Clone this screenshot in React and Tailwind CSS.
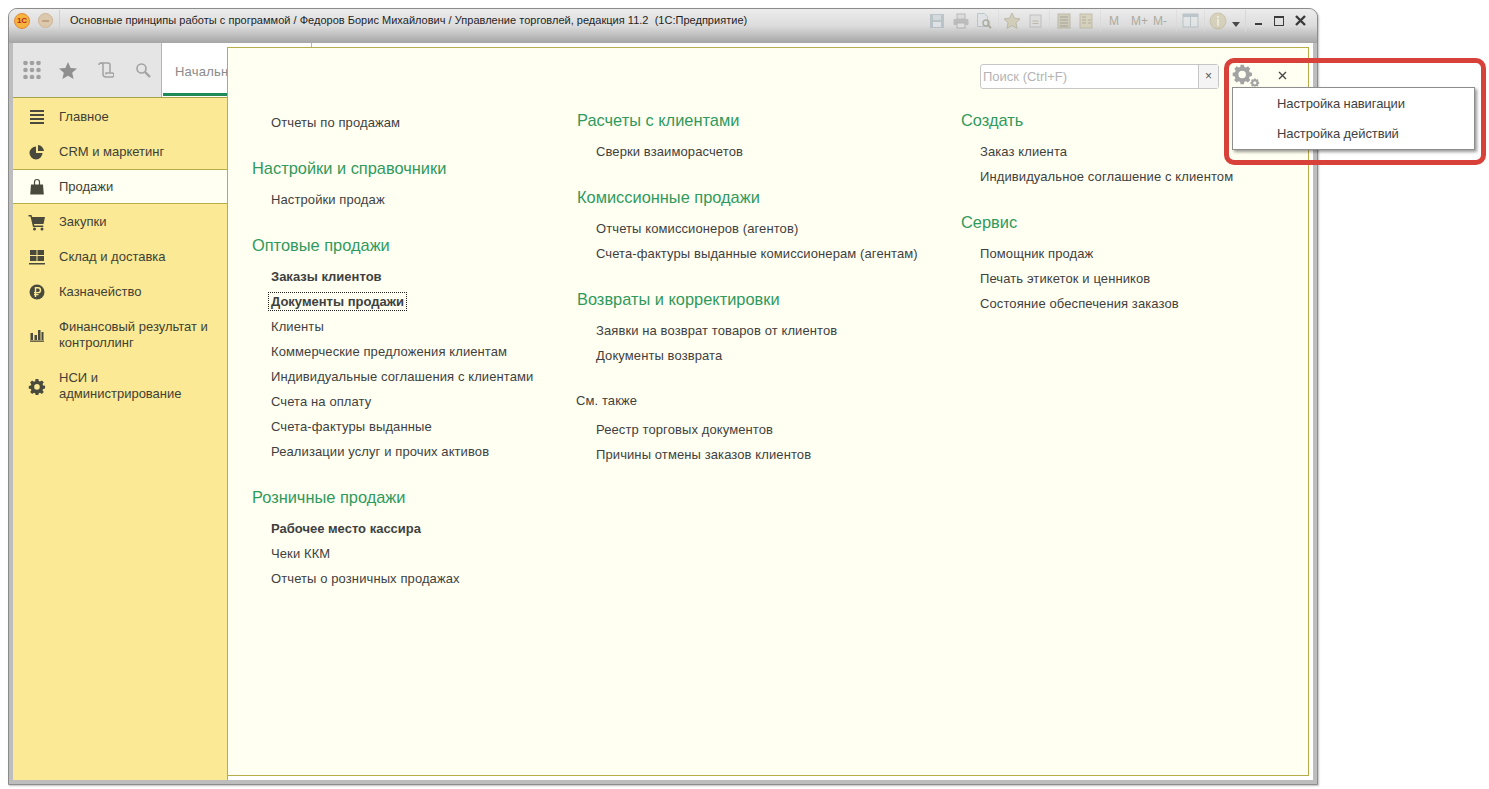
import { Fragment } from 'react'

const SIDEBAR = [
  { label: 'Главное', icon: 'menu' },
  { label: 'CRM и маркетинг', icon: 'pie' },
  { label: 'Продажи', icon: 'bag', active: true },
  { label: 'Закупки', icon: 'cart' },
  { label: 'Склад и доставка', icon: 'grid' },
  { label: 'Казначейство', icon: 'rub' },
  { label: 'Финансовый результат и контроллинг', icon: 'bars', tall: true },
  { label: 'НСИ и администрирование', icon: 'gear', tall: true },
]

function SideIcon({ name }) {
  const c = '#4a4a3c'
  return (
    <svg width="18" height="18" viewBox="0 0 18 18" fill={c}>
      {name === 'menu' && (
        <>
          <rect x="2" y="2" width="14" height="2" />
          <rect x="2" y="6" width="14" height="2" />
          <rect x="2" y="10" width="14" height="2" />
          <rect x="2" y="14" width="14" height="2" />
        </>
      )}
      {name === 'pie' && (
        <>
          <path d="M8 3.5a6.5 6.5 0 1 0 6.5 6.5H8z" />
          <path d="M10 2a6.5 6.5 0 0 1 6 6h-6z" />
        </>
      )}
      {name === 'bag' && (
        <>
          <path d="M3 6.5h12l.8 10H2.2z" />
          <path d="M6.5 8V4a2.5 2.5 0 0 1 5 0v4" fill="none" stroke={c} strokeWidth="1.2" />
        </>
      )}
      {name === 'cart' && (
        <>
          <path d="M0.5 2h3l.6 2H17l-1.5 7H6l.3 1.5h9V14H5L2.5 3.5h-2z" />
          <circle cx="6.5" cy="16" r="1.5" />
          <circle cx="14" cy="16" r="1.5" />
        </>
      )}
      {name === 'grid' && (
        <>
          <rect x="2" y="2" width="6.5" height="5" />
          <rect x="9.5" y="2" width="6.5" height="5" />
          <rect x="2" y="8" width="6.5" height="5" />
          <rect x="9.5" y="8" width="6.5" height="5" />
          <rect x="1" y="15" width="16" height="1.5" />
        </>
      )}
      {name === 'rub' && (
        <>
          <circle cx="9" cy="9" r="7.5" />
          <path d="M7.5 14V4.8h2.6a2.4 2.4 0 0 1 0 4.8H6M6 11.6h4.5" fill="none" stroke="#fbe996" strokeWidth="1.4" />
        </>
      )}
      {name === 'bars' && (
        <>
          <rect x="2.5" y="7" width="2.5" height="7" />
          <rect x="6.5" y="9" width="2.5" height="5" />
          <rect x="10" y="4" width="2.5" height="10" />
          <rect x="13.5" y="6" width="2" height="8" />
          <rect x="2" y="14.5" width="14" height="1.3" />
        </>
      )}
      {name === 'gear' && (
        <path
          fillRule="evenodd"
          d="M7.5 1.5h3l.4 2.2 1.4.6 1.9-1.3 2.1 2.1-1.3 1.9.6 1.4 2.1.4v3l-2.1.4-.6 1.4 1.3 1.9-2.1 2.1-1.9-1.3-1.4.6-.4 1.9h-3l-.4-1.9-1.4-.6-1.9 1.3-2.1-2.1 1.3-1.9-.6-1.4L.2 12V9l2.1-.4.6-1.4-1.3-1.9 2.1-2.1 1.9 1.3 1.4-.6zM9 7a3 3 0 1 0 0 6 3 3 0 0 0 0-6z"
          transform="translate(0.6 0.6) scale(0.93)"
        />
      )}
    </svg>
  )
}

function Sep({ className }) {
  return <span className={`w-px h-[22px] bg-[#d8d8d8] shrink-0 ${className}`} />
}

function ToolIcons() {
  const s = '#9fb0b8'
  return (
    <div className="ml-auto flex items-center h-full">
      <div className="flex items-center h-full opacity-60">
        <svg width="16" height="16" viewBox="0 0 16 16" className="shrink-0">
          <rect x="1" y="1" width="14" height="14" fill={s} />
          <rect x="4" y="2" width="8" height="5" fill="#c9d3d8" />
          <rect x="4" y="9" width="8" height="5" fill="#dfe5e8" />
        </svg>
        <svg width="18" height="16" viewBox="0 0 18 16" className="ml-[7px] shrink-0">
          <rect x="5" y="1" width="8" height="5" fill="#d8d8d8" stroke="#999" />
          <rect x="1.5" y="6" width="15" height="6" rx="1" fill="#a5a5a5" />
          <rect x="5" y="10" width="8" height="5" fill="#e2e2e2" stroke="#999" />
        </svg>
        <svg width="18" height="17" viewBox="0 0 18 17" className="ml-[5px] shrink-0" fill="none">
          <path d="M2.5 1.5h7l3 3v10h-10z" fill="#dde3e6" stroke={s} />
          <circle cx="11" cy="11" r="3" stroke="#8d8d7a" strokeWidth="1.5" />
          <path d="M13 13l3 3" stroke="#8d8d7a" strokeWidth="2" />
        </svg>
        <Sep className="ml-[5px]" />
        <svg width="18" height="17" viewBox="0 0 18 17" className="ml-[4px] shrink-0">
          <path d="M9 1l2.4 5.2 5.6.7-4.1 3.8 1.1 5.6L9 13.6l-5 2.7 1.1-5.6L1 6.9l5.6-.7z" fill="#c8c2a0" stroke="#a5a184" />
        </svg>
        <svg width="13" height="14" viewBox="0 0 13 14" className="ml-[8px] shrink-0" fill="none">
          <rect x="1" y="1" width="11" height="12" fill="#dbdbdb" stroke="#a8a8a8" />
          <path d="M3.5 7h6M3.5 9.5h6" stroke="#a8a08a" />
        </svg>
        <Sep className="ml-[7px]" />
        <svg width="14" height="16" viewBox="0 0 14 16" className="ml-[7px] shrink-0" fill="none">
          <rect x="1" y="1" width="12" height="14" fill="#c4bfa2" stroke="#a59f85" />
          <path d="M3 4h8M3 7h8M3 10h8M3 13h8" stroke="#7d7a68" />
        </svg>
        <svg width="14" height="16" viewBox="0 0 14 16" className="ml-[8px] shrink-0" fill="none">
          <rect x="1" y="1" width="12" height="14" fill="#d0c9a6" stroke="#aaa486" />
          <path d="M3 4h4M3 7h4M3 10h4M9 7h3M9 10h3" stroke="#8e8a72" />
        </svg>
        <Sep className="ml-[7px]" />
        <span className="ml-[8px] w-[12px] text-[12px] text-[#8a8670]">M</span>
        <span className="ml-[10px] w-[17px] text-[12px] text-[#8a8670]">M+</span>
        <span className="ml-[5px] w-[17px] text-[12px] text-[#8a8670]">M-</span>
        <Sep className="ml-[6px]" />
        <svg width="17" height="15" viewBox="0 0 17 15" className="ml-[5px] shrink-0" fill="none">
          <rect x="1" y="1" width="15" height="13" fill="#e3e7e9" stroke={s} />
          <rect x="1" y="1" width="15" height="3" fill={s} />
          <path d="M8.5 4v10" stroke={s} />
        </svg>
        <Sep className="ml-[5px]" />
        <svg width="18" height="18" viewBox="0 0 18 18" className="ml-[4px] shrink-0">
          <circle cx="9" cy="9" r="8" fill="#cfc6a2" stroke="#b9b08b" />
          <rect x="8" y="4" width="2" height="2" fill="#f1edd9" />
          <rect x="8" y="7" width="2" height="7" fill="#f1edd9" />
        </svg>
      </div>
      <svg width="8" height="5" viewBox="0 0 8 5" className="ml-[5px] mt-[8px] shrink-0">
        <path d="M0 0h8L4 5z" fill="#4a4a4a" />
      </svg>
      <Sep className="ml-[5px]" />
      <span className="ml-[9px] w-[7px] h-[2px] mt-[6px] bg-[#3c3c3c]" />
      <span className="ml-[12px] w-[10px] h-[10px] border border-[#3c3c3c] border-t-2" />
      <svg width="11" height="11" viewBox="0 0 11 11" className="ml-[11px] mr-[11px] shrink-0">
        <path d="M1 1l9 9M10 1l-9 9" stroke="#3a3a3a" strokeWidth="2.4" />
      </svg>
    </div>
  )
}

function Heading({ children, first }) {
  return (
    <div className={`h-[25px] leading-[25px] text-[16.4px] text-[#2f9a5c] whitespace-nowrap ${first ? 'mb-[6px]' : 'mt-[21px] mb-[6px]'}`}>
      {children}
    </div>
  )
}

function Item({ children, bold, focus }) {
  return (
    <div className="h-[25px] pl-[19px] leading-[25px] whitespace-nowrap">
      <span className={`${bold ? 'font-bold' : 'tracking-[0.1px]'} ${focus ? 'outline-1 outline-dotted outline-[#222] outline-offset-[1px] px-px -ml-px' : ''}`}>
        {children}
      </span>
    </div>
  )
}

function Panel() {
  return (
    <div className="absolute left-[218px] top-[38px] w-[1082px] h-[729px] bg-[#fffff2] border border-[#b9ad4a] text-[13px] text-[#3f3f3f]">
      <div className="flex items-center h-[60px] pb-[4px] pl-[752px]">
        <div className="flex w-[239px] h-[25px] border border-[#c6c6c6] rounded-[3px] bg-white">
          <span className="flex-1 pl-[2px] leading-[23px] text-[13px] text-[#b4b4b4]">Поиск (Ctrl+F)</span>
          <span className="w-[20px] border-l border-[#c6c6c6] bg-[#f4f4f4] text-center leading-[22px] text-[12px] text-[#555]">×</span>
        </div>
        <svg width="30" height="26" viewBox="0 0 30 26" className="ml-[13px] shrink-0" fill="#a3a3a3">
          <path
            fillRule="evenodd"
            d="M10 2h4l.5 2.6 2 .8 2.2-1.5 2.8 2.8-1.5 2.2.8 2 2.7.5v4l-2.7.5-.8 2 1.500 2.200-2.800 2.800-2.200-1.500-2 .8-.5 2.700h-4l-.5-2.700-2-.8-2.200 1.500-2.800-2.800 1.500-2.200-.8-2L.8 15.400v-4l2.700-.5.8-2-1.500-2.200 2.800-2.800 2.200 1.500 2-.8zM12 9a4.400 4.400 0 1 0 0 8.800A4.400 4.400 0 0 0 12 9z"
            transform="scale(0.85)"
          />
          <path
            fillRule="evenodd"
            d="M22.500 18h2l.3 1.200 1 .4 1-.7 1.400 1.400-.7 1 .4 1 1.100.3v2l-1.100.3-.4 1 .7 1-1.400 1.100-1-.6-1 .4-.3.200h-2l-.3-.2-1-.4-1 .6-1.400-1.100.7-1-.4-1-1.100-.3v-2l1.100-.3.4-1-.7-1 1.400-1.400 1 .7 1-.4zM23.500 21.500a2 2 0 1 0 0 4 2 2 0 0 0 0-4z"
            transform="translate(4 1) scale(0.8)"
          />
        </svg>
        <svg width="9" height="9" viewBox="0 0 9 9" className="ml-[16px] -mt-[2px] shrink-0">
          <path d="M1 1l7 7M8 1l-7 7" stroke="#444" strokeWidth="1.3" />
        </svg>
      </div>

      <div className="flex pl-[24px]">
        <div className="w-[325px] pt-[2px]">
          <Item>Отчеты по продажам</Item>
          <Heading>Настройки и справочники</Heading>
          <Item>Настройки продаж</Item>
          <Heading>Оптовые продажи</Heading>
          <Item bold>Заказы клиентов</Item>
          <Item bold focus>Документы продажи</Item>
          <Item>Клиенты</Item>
          <Item>Коммерческие предложения клиентам</Item>
          <Item>Индивидуальные соглашения с клиентами</Item>
          <Item>Счета на оплату</Item>
          <Item>Счета-фактуры выданные</Item>
          <Item>Реализации услуг и прочих активов</Item>
          <Heading>Розничные продажи</Heading>
          <Item bold>Рабочее место кассира</Item>
          <Item>Чеки ККМ</Item>
          <Item>Отчеты о розничных продажах</Item>
        </div>
        <div className="w-[384px]">
          <Heading first>Расчеты с клиентами</Heading>
          <Item>Сверки взаиморасчетов</Item>
          <Heading>Комиссионные продажи</Heading>
          <Item>Отчеты комиссионеров (агентов)</Item>
          <Item>Счета-фактуры выданные комиссионерам (агентам)</Item>
          <Heading>Возвраты и корректировки</Heading>
          <Item>Заявки на возврат товаров от клиентов</Item>
          <Item>Документы возврата</Item>
          <div className="h-[25px] mt-[20px] mb-[4px] -ml-px leading-[25px] tracking-[0.1px]">См. также</div>
          <Item>Реестр торговых документов</Item>
          <Item>Причины отмены заказов клиентов</Item>
        </div>
        <div>
          <Heading first>Создать</Heading>
          <Item>Заказ клиента</Item>
          <Item>Индивидуальное соглашение с клиентом</Item>
          <Heading>Сервис</Heading>
          <Item>Помощник продаж</Item>
          <Item>Печать этикеток и ценников</Item>
          <Item>Состояние обеспечения заказов</Item>
        </div>
      </div>
    </div>
  )
}

export default function App() {
  return (
    <div className="relative w-[1489px] h-[789px] bg-white pl-2 pt-2 overflow-hidden font-['Liberation_Sans',Arial,sans-serif]">
      <div className="relative flex flex-col w-[1310px] h-[777px] border border-[#8c8c8c] rounded-t-[9px] bg-[#bdbdbd] shadow-[1px_1px_2px_rgba(0,0,0,0.25)]">
        {/* заголовок окна */}
        <div className="flex items-start h-[34px] shrink-0 rounded-t-[8px] bg-gradient-to-b from-[#ececec] via-[#dcdcdc] to-[#a6a6a6]">
          <div className="flex items-center w-full h-[23px]">
            <span className="ml-[5px] w-[16px] h-[16px] rounded-full bg-[#f6b23c] border border-[#e08a3a] flex items-center justify-center text-[8px] font-bold leading-none text-[#b3261e]">1C</span>
            <span className="ml-[8px] w-[15px] h-[15px] rounded-full bg-[#dcc9ad] border border-[#cdb595] flex items-center justify-center">
              <span className="w-[7px] h-[2px] bg-[#bfa486]" />
            </span>
            <span className="ml-[6px] w-px h-[22px] bg-[#cfcfcf]" />
            <span className="ml-[10px] text-[11px] tracking-[0.02px] text-[#1f1f1f] whitespace-pre">
              Основные принципы работы с программой / Федоров Борис Михайлович / Управление торговлей, редакция 11.2  (1С:Предприятие)
            </span>
            <ToolIcons />
          </div>
        </div>

        {/* рабочая область */}
        <div className="flex-1 min-h-0 mx-[4px] mb-[4px] bg-white flex flex-col">
          <div className="flex h-[55px] shrink-0 bg-white border-b border-[#a9a04a] text-[#8a8a8a]">
            <div className="flex items-center w-[149px] bg-[#e5e5e5] border-r border-[#b4b4b4] pl-[10px]">
              <svg width="18" height="18" viewBox="0 0 18 18" fill="#a0a0a0">
                {[2, 9, 16].map((cy) => (
                  <Fragment key={cy}>
                    <circle cx="2.5" cy={cy} r="2.3" />
                    <circle cx="9" cy={cy} r="2.3" />
                    <circle cx="15.5" cy={cy} r="2.3" />
                  </Fragment>
                ))}
              </svg>
              <svg width="18" height="17" viewBox="0 0 18 17" fill="#8f8f8f" className="ml-[18px]">
                <path d="M9 0l2.6 6 6.4.6-4.8 4.2 1.4 6.2L9 13.8 3.4 17l1.4-6.2L0 6.600 6.400 6z" />
              </svg>
              <svg width="16" height="17" viewBox="0 0 16 17" fill="none" stroke="#a2a2a2" strokeWidth="1.5" className="ml-[21px]">
                <path d="M1 3a2 2 0 0 1 4 0v9a3 3 0 0 0 3 3h6a2 2 0 0 0 0-4H8v1.5" />
                <path d="M3 1h7a2 2 0 0 1 2 2v8" />
              </svg>
              <svg width="16" height="16" viewBox="0 0 16 16" fill="none" stroke="#a2a2a2" className="ml-[21px]">
                <circle cx="6.5" cy="6.5" r="4.5" strokeWidth="1.6" />
                <path d="M10 10l5 5" strokeWidth="2.4" />
              </svg>
            </div>
            <div className="relative w-[150px] border-r border-[#b4b4b4] pl-[13px] pt-[19px] text-[13px] tracking-[0.2px] whitespace-nowrap">
              Начальная страница
              <span className="absolute left-px right-0 bottom-[1px] h-[3px] bg-[#1f8a55]" />
            </div>
          </div>
          <div className="flex-1 min-h-0 w-[215px] pt-px bg-[#fbe996] border-r border-[#b9ad4a] text-[13px] text-[#3f3f35]">
            {SIDEBAR.map((r) => (
              <div
                key={r.label}
                className={`flex items-center pl-[15px] pr-[14px] ${r.tall ? 'h-[51px]' : 'h-[35px]'} ${r.active ? 'bg-[#fffff2] border-y border-[#b9ad4a]' : ''}`}
              >
                <span className="w-[18px] h-[18px] shrink-0"><SideIcon name={r.icon} /></span>
                <span className="ml-[13px] leading-[16px]">{r.label}</span>
              </div>
            ))}
          </div>
        </div>

        <Panel />
      </div>

      {/* выноска поверх окна */}
      <div className="absolute left-[1224px] top-[58px] w-[262px] h-[107px] border-[5px] border-[#d8413a] rounded-[10px]" />
      <div className="absolute left-[1232px] top-[87px] w-[243px] h-[63px] bg-white border border-[#8e8e8e] shadow-[2px_2px_3px_rgba(0,0,0,0.4)] text-[13px] text-[#3f3f3f] tracking-[-0.1px]">
        <div className="h-[30px] pl-[44px] pt-px leading-[30px]">Настройка навигации</div>
        <div className="h-[30px] pl-[44px] pt-px leading-[30px]">Настройка действий</div>
      </div>
    </div>
  )
}
